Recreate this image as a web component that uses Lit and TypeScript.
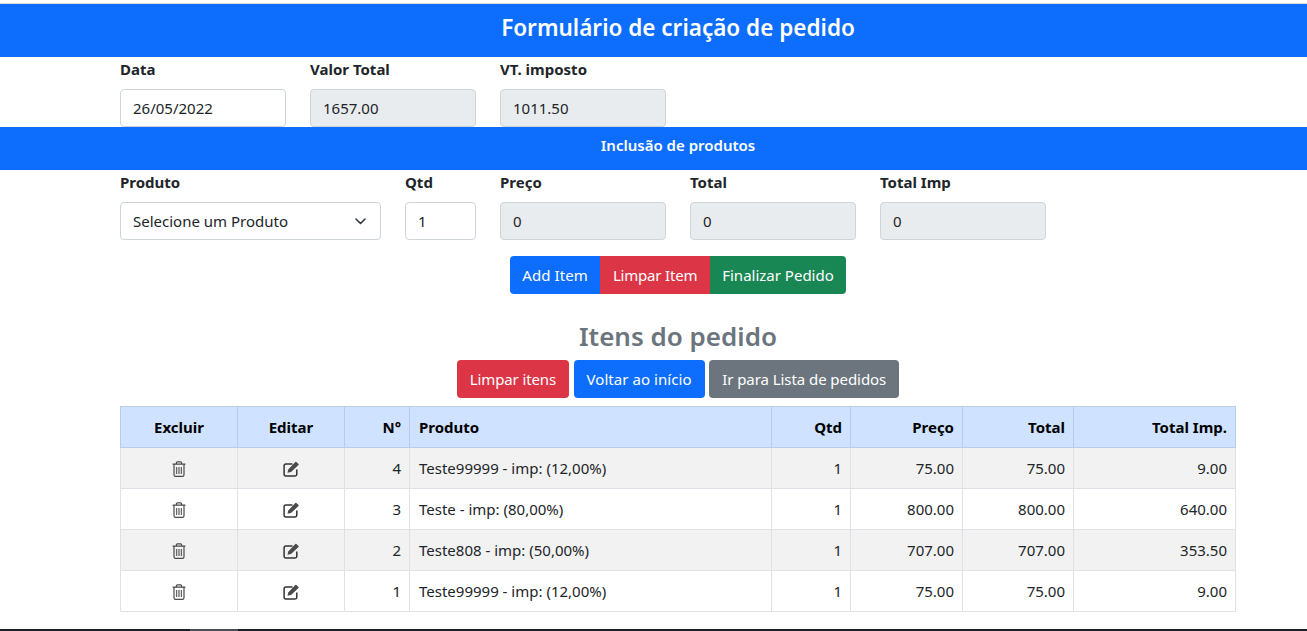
import { LitElement, html, css } from "lit";
import { customElement } from "lit/decorators.js";

const trash = html`<svg class="ico" viewBox="0 0 14 16" width="14" height="16" fill="none" stroke="#4a4a4a" stroke-width="1.2">
  <path d="M.6 3.2h12.8M4.4 3V1.8q0-1 1-1h3.2q1 0 1 1V3M2 3.4v10.4q0 1.6 1.6 1.6h6.8q1.6 0 1.6-1.6V3.4"/>
  <path d="M4.6 6v7M7 6v7M9.4 6v7" stroke-width="1.3" stroke="#666"/>
</svg>`;

const edit = html`<svg class="ico" viewBox="0 0 16 16" width="16" height="16">
  <path d="M13.8 8.500v4.800q0 1.700-1.700 1.700H2.800q-1.700 0-1.700-1.700V4.800q0-1.700 1.700-1.700h6.700" fill="none" stroke="#333" stroke-width="1.500"/>
  <path d="M4.500 11.800l.7-3.300L12.300 1q.6-.5 1.100 0l2.100 2q.5.5 0 1.100L8 11.100z" fill="#4a4a4a"/>
</svg>`;

const rows = [
  ["4", "Teste99999 - imp: (12,00%)", "1", "75.00", "75.00", "9.00"],
  ["3", "Teste - imp: (80,00%)", "1", "800.00", "800.00", "640.00"],
  ["2", "Teste808 - imp: (50,00%)", "1", "707.00", "707.00", "353.50"],
  ["1", "Teste99999 - imp: (12,00%)", "1", "75.00", "75.00", "9.00"],
];

@customElement("app-root")
export class AppRoot extends LitElement {
  static styles = css`
    :host {
      display: block;
      width: 1307px;
      height: 631px;
      overflow: hidden;
      position: relative;
      background: #fff;
      font-family: "Noto Sans", "Open Sans", sans-serif;
      font-size: 15px;
      color: #212529;
    }
    .page {
      width: 1356px;
      padding-top: 3px;
    }
    .bar {
      background: #0d6efd;
      color: #fff;
      text-align: center;
      font-weight: 600;
    }
    .bar.main {
      height: 53px;
      line-height: 48px;
      font-size: 22.5px;
      border-top: 1px solid #dcdcdc;
    }
    .bar.sub {
      height: 43px;
      line-height: 37px;
      font-size: 15px;
    }
    .container {
      width: 1116px;
      margin: 0 auto;
    }
    .fields {
      display: flex;
      gap: 24px;
    }
    .fields.top {
      height: 70px;
    }
    .fields.prod {
      height: 86px;
    }
    .field {
      width: 166px;
      display: flex;
      flex-direction: column;
    }
    .field.wide {
      width: 261px;
    }
    .field.small {
      width: 71px;
    }
    label {
      font-weight: 700;
      font-size: 15px;
      height: 32px;
      line-height: 25px;
    }
    .control {
      box-sizing: border-box;
      height: 38px;
      width: 100%;
      border: 1px solid #ced4da;
      border-radius: 4px;
      padding: 0 12px;
      font: inherit;
      color: #212529;
      background: #fff;
      outline: none;
    }
    .control[readonly] {
      background: #e9ecef;
    }
    .select-wrap {
      position: relative;
    }
    select.control {
      appearance: none;
    }
    .chev {
      position: absolute;
      right: 15px;
      top: 16px;
    }
    .actions {
      display: flex;
      justify-content: center;
    }
    .btn {
      box-sizing: border-box;
      height: 38px;
      border: 0;
      border-radius: 4px;
      padding: 0 13px;
      font: inherit;
      color: #fff;
    }
    .blue {
      background: #0d6efd;
    }
    .red {
      background: #dc3545;
    }
    .green {
      background: #198754;
    }
    .gray {
      background: #6c757d;
    }
    .group .btn {
      border-radius: 0;
      padding: 0 12px;
    }
    .group .blue {
      letter-spacing: 0.1px;
    }
    .group .red {
      padding: 0 13px;
      letter-spacing: -0.2px;
    }
    .group .btn:first-child {
      border-radius: 4px 0 0 4px;
    }
    .group .btn:last-child {
      border-radius: 0 4px 4px 0;
    }
    h2 {
      margin: 22px 0 0;
      height: 44px;
      line-height: 40px;
      text-align: center;
      color: #6c757d;
      font-size: 26px;
      font-weight: 600;
    }
    .links {
      gap: 4.5px;
    }
    .links .red {
      letter-spacing: -0.12px;
    }
    .links .blue {
      letter-spacing: 0.06px;
    }
    .links .gray {
      letter-spacing: -0.06px;
    }
    table {
      margin-top: 8px;
      width: 1115px;
      table-layout: fixed;
      border-collapse: collapse;
      font-size: 15px;
    }
    th,
    td {
      box-sizing: border-box;
      height: 41px;
      padding: 0 8px;
      border: 1px solid #dee2e6;
      text-align: right;
      font-weight: 400;
    }
    th {
      background: #cfe2ff;
      border-color: #bacbe6;
      font-weight: 700;
      color: #000;
      font-size: 15px;
    }
    tbody tr:nth-child(odd) td {
      background: #f2f2f2;
    }
    .c {
      text-align: center;
    }
    th.l,
    td.l {
      text-align: left;
      padding-left: 9px;
    }
    .ico {
      display: block;
      margin: 1px auto 0;
    }
    .taskbar {
      position: absolute;
      left: 0;
      right: 0;
      bottom: 0;
      height: 2px;
      background: #1b1f2d;
    }
    .taskbar i {
      position: absolute;
      left: 190px;
      width: 48px;
      height: 2px;
      background: #4b4e57;
    }
  `;

  render() {
    return html`
      <div class="page">
        <div class="bar main">Formulário de criação de pedido</div>
        <div class="container fields top">
          <div class="field"><label>Data</label><input class="control" value="26/05/2022" /></div>
          <div class="field"><label>Valor Total</label><input class="control" readonly value="1657.00" /></div>
          <div class="field"><label>VT. imposto</label><input class="control" readonly value="1011.50" /></div>
        </div>
        <div class="bar sub">Inclusão de produtos</div>
        <div class="container">
          <div class="fields prod">
            <div class="field wide">
              <label>Produto</label>
              <div class="select-wrap">
                <select class="control"><option>Selecione um Produto</option></select>
                <svg class="chev" width="11" height="7" viewBox="0 0 11 7" fill="none" stroke="#343a40" stroke-width="1.6" stroke-linecap="round" stroke-linejoin="round"><path d="M1 1l4.500 4.500L10 1" /></svg>
              </div>
            </div>
            <div class="field small"><label>Qtd</label><input class="control" value="1" /></div>
            <div class="field"><label>Preço</label><input class="control" readonly value="0" /></div>
            <div class="field"><label>Total</label><input class="control" readonly value="0" /></div>
            <div class="field"><label>Total Imp</label><input class="control" readonly value="0" /></div>
          </div>
          <div class="actions group">
            <button class="btn blue">Add Item</button>
            <button class="btn red">Limpar Item</button>
            <button class="btn green">Finalizar Pedido</button>
          </div>
          <h2>Itens do pedido</h2>
          <div class="actions links">
            <button class="btn red">Limpar itens</button>
            <button class="btn blue">Voltar ao início</button>
            <button class="btn gray">Ir para Lista de pedidos</button>
          </div>
          <table>
            <colgroup>
              <col style="width:117px" /><col style="width:107px" /><col style="width:65px" /><col style="width:362px" />
              <col style="width:79px" /><col style="width:112px" /><col style="width:111px" /><col style="width:162px" />
            </colgroup>
            <thead>
              <tr>
                <th class="c">Excluir</th><th class="c">Editar</th><th>N°</th><th class="l">Produto</th>
                <th>Qtd</th><th>Preço</th><th>Total</th><th>Total Imp.</th>
              </tr>
            </thead>
            <tbody>
              ${rows.map(
                (r) => html`<tr>
                  <td class="c">${trash}</td><td class="c">${edit}</td><td>${r[0]}</td><td class="l">${r[1]}</td>
                  <td>${r[2]}</td><td>${r[3]}</td><td>${r[4]}</td><td>${r[5]}</td>
                </tr>`
              )}
            </tbody>
          </table>
        </div>
      </div>
      <div class="taskbar"><i></i></div>
    `;
  }
}
